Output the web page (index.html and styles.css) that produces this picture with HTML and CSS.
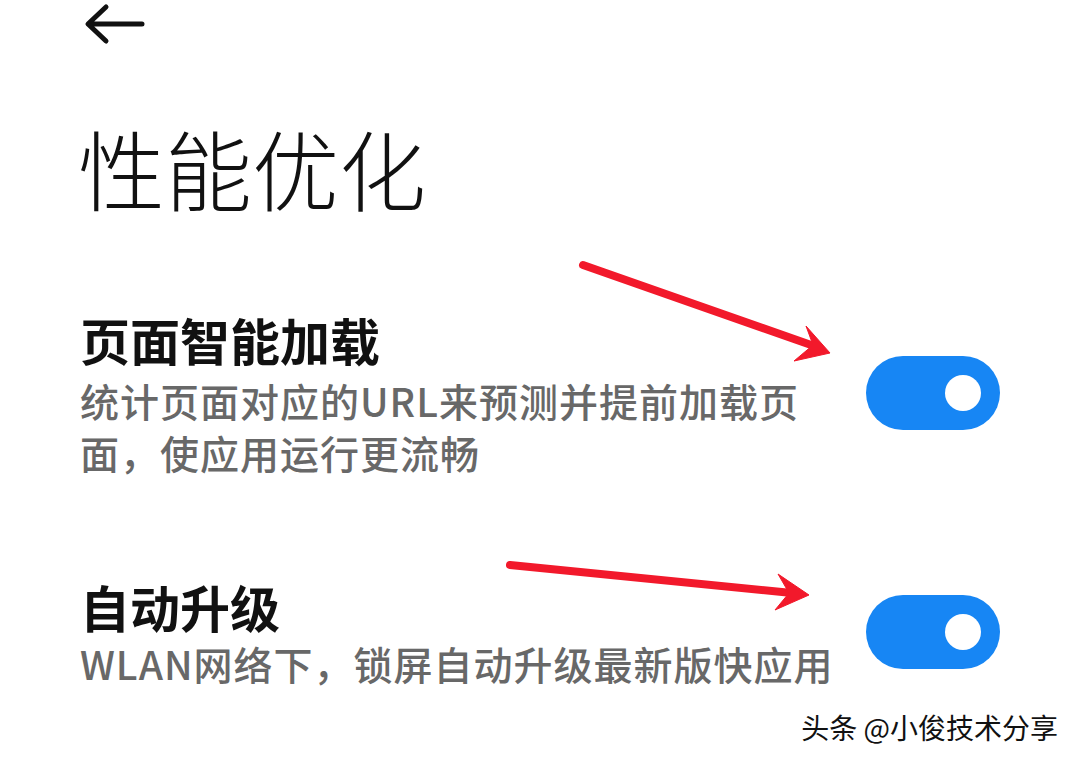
FILE: index.html
```html
<!DOCTYPE html>
<html lang="zh-CN">
<head>
<meta charset="utf-8">
<title>性能优化</title>
<link rel="stylesheet" href="styles.css">
</head>
<body>
<div class="screen">
  <header class="topbar">
    <svg class="back" width="64" height="48" viewBox="0 0 64 48" aria-label="返回">
      <path d="M59 24H6M23 7L5 24L23 41" fill="none" stroke="#111" stroke-width="5" stroke-linecap="round" stroke-linejoin="round"/>
    </svg>
  </header>

  <h1 class="page-title">性能优化</h1>

  <section class="setting first">
    <div class="setting-text">
      <div class="setting-name">页面智能加载</div>
      <div class="setting-desc">统计页面对应的URL来预测并提前加载页<br>面，使应用运行更流畅</div>
    </div>
    <div class="switch on"><span class="knob"></span></div>
  </section>

  <section class="setting second">
    <div class="setting-text">
      <div class="setting-name">自动升级</div>
      <div class="setting-desc">WLAN网络下，锁屏自动升级最新版快应用</div>
    </div>
    <div class="switch on"><span class="knob"></span></div>
  </section>

  <!-- annotation arrows drawn over the list -->
  <svg class="marks" width="1080" height="763" viewBox="0 0 1080 763">
    <g fill="#f2192b" stroke="#f2192b">
      <line x1="583" y1="265" x2="814" y2="346" stroke-width="8" stroke-linecap="round"/>
      <polygon points="830,353 806,326 813,345 794,361" stroke-width="1"/>
      <line x1="510" y1="565" x2="792" y2="593" stroke-width="8" stroke-linecap="round"/>
      <polygon points="809,595 778,574 789,593 775,610" stroke-width="1"/>
    </g>
  </svg>

  <div class="watermark">头条 @小俊技术分享</div>
</div>
</body>
</html>
```

FILE: styles.css
```css
html, body {
  margin: 0;
  padding: 0;
  background: #ffffff;
}

.screen {
  position: relative;
  width: 1080px;
  height: 763px;
  overflow: hidden;
  background: #ffffff;
  font-family: "Noto Sans CJK SC", "Noto Sans", sans-serif;
  color: #111111;
}

.topbar {
  height: 50px;
  padding-left: 83px;
  display: flex;
  align-items: flex-start;
}

.back {
  display: block;
}

.page-title {
  margin: 67px 0 0 0;
  padding-left: 78px;
  font-size: 87px;
  font-weight: 300;
  line-height: 100px;
  color: #111111;
}

.setting {
  display: flex;
  align-items: center;
  justify-content: space-between;
  padding: 0 80px 0 80px;
}

.setting.first {
  margin-top: 92px;
}

.setting.second {
  margin-top: 98px;
}

.setting-name {
  font-size: 50px;
  font-weight: 700;
  line-height: 60px;
  color: #111111;
}

.setting-desc {
  margin-top: 5px;
  font-size: 39px;
  font-weight: 500;
  line-height: 52px;
  letter-spacing: 1px;
  color: #686868;
  white-space: nowrap;
}

.second .setting-desc {
  margin-top: 1px;
}

.switch {
  position: relative;
  flex: none;
  width: 134px;
  height: 74px;
  border-radius: 37px;
  background: #1786f4;
  margin-bottom: 1px;
}

.knob {
  position: absolute;
  right: 19px;
  top: 19px;
  width: 36px;
  height: 36px;
  border-radius: 50%;
  background: #ffffff;
}

.marks {
  position: absolute;
  left: 0;
  top: 0;
  pointer-events: none;
}

.watermark {
  position: absolute;
  right: 22px;
  top: 709px;
  font-size: 28px;
  line-height: 36px;
  color: #111111;
  text-shadow: 1px 1px 0 #ffffff, -1px -1px 0 #ffffff, 1px -1px 0 #ffffff, -1px 1px 0 #ffffff;
}
```
